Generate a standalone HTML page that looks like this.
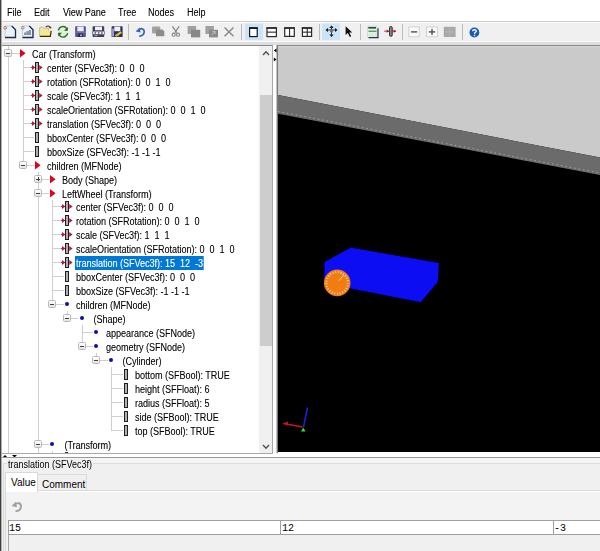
<!DOCTYPE html>
<html><head><meta charset="utf-8">
<style>
*{box-sizing:border-box}
html,body{margin:0;padding:0}
body{width:600px;height:551px;overflow:hidden;position:relative;background:#f0f0f0;font-family:"Liberation Sans",sans-serif;font-size:9px;color:#000}
.a{position:absolute}
.mi{position:absolute;top:7px;font-size:10px;line-height:12px;color:#000;text-shadow:0.4px 0 0 rgba(0,0,0,0.25);transform:scaleX(0.9);transform-origin:0 0}
.ft{font-size:10px;transform:scaleX(0.9);transform-origin:0 0}
.sep{position:absolute;top:24px;width:1px;height:17px;background:#c8c8c8}
#tree{position:absolute;left:1px;top:45px;width:272px;height:409px;background:#fff;overflow:hidden;border-top:1px solid #8a8a8a;border-left:1px solid #c8c8c8;border-right:1px solid #a8a8a8;border-bottom:1px solid #a8a8a8}
#treec .vl{position:absolute;width:1px;background:#cfcfcf}
#treec .hl{position:absolute;height:1px;background:#cfcfcf}
#treec .bx{position:absolute;width:8px;height:8px;border:1px solid #b8b8b8;border-radius:1.5px;background:linear-gradient(#fff,#e4e4e4)}
#treec .bx .mh{position:absolute;left:1px;top:2.5px;width:4px;height:1.2px;background:#404040}
#treec .bx .mv{position:absolute;left:2.5px;top:1px;width:1.2px;height:4px;background:#404040}
#treec .tri{position:absolute;width:0;height:0;border-left:6px solid #e0001a;border-top:4px solid transparent;border-bottom:4px solid transparent}
#treec .dot{position:absolute;width:4px;height:4px;border-radius:50%;background:#1010a0}
#treec .ic{position:absolute}
#treec .tt{text-shadow:0.4px 0 0 rgba(0,0,0,0.25);position:absolute;height:14px;line-height:14px;font-size:10px;white-space:pre;padding:1px 1px 0 1px;color:#000;overflow:hidden;letter-spacing:0;transform:scaleX(0.9);transform-origin:0 0}
#treec .sel{background:#0078d7;color:#fff;text-shadow:0.4px 0 0 rgba(255,255,255,0.35)}
</style></head><body>
<!-- window left border -->
<div class="a" style="left:0;top:0;width:1px;height:551px;background:#404040;z-index:5"></div>
<div class="a" style="left:1px;top:0;width:1px;height:551px;background:#b0b0b0;z-index:5"></div>
<!-- menu bar -->
<div class="a" style="left:1px;top:0;width:599px;height:21px;background:#fff"></div>
<div class="mi" style="left:7px">File</div>
<div class="mi" style="left:34px">Edit</div>
<div class="mi" style="left:63px">View Pane</div>
<div class="mi" style="left:118px">Tree</div>
<div class="mi" style="left:148px">Nodes</div>
<div class="mi" style="left:187px">Help</div>
<div class="a" style="left:1px;top:21px;width:599px;height:1px;background:#cfcfcf"></div>
<div class="a" style="left:1px;top:22px;width:599px;height:1px;background:#fafafa"></div>
<!-- toolbar bottom -->
<div class="a" style="left:1px;top:41px;width:599px;height:1px;background:#fbfbfb"></div>
<div class="a" style="left:1px;top:42px;width:599px;height:3px;background:#dedede"></div>
<svg class="a" style="left:0;top:0" width="600" height="45" viewBox="0 0 600 45">
<!-- separators -->
<g fill="#bcbcbc">
<rect x="128" y="24" width="1" height="16"/>
<rect x="241" y="24" width="1" height="16"/>
<rect x="319" y="24" width="1" height="16"/>
<rect x="360" y="24" width="1" height="16"/>
<rect x="402" y="24" width="1" height="16"/>
<rect x="462" y="24" width="1" height="16"/>
</g>
<!-- selected buttons -->
<rect x="245" y="23.5" width="18" height="16.5" fill="#cce4f7"/>
<rect x="322" y="23.5" width="18" height="16.5" fill="#cce4f7"/>
<!-- 1 new doc -->
<path d="M5 26H11.8L15.5 29.7V37.5H5Z" fill="#e6f2fc" stroke="#b8c4d0" stroke-width="0.8"/>
<path d="M11.8 26L15.5 29.7V37.5H5" fill="none" stroke="#202a48" stroke-width="1.3"/>
<circle cx="5.2" cy="27.8" r="1.4" fill="none" stroke="#d07050" stroke-width="1"/>
<!-- 2 new doc template -->
<path d="M22.5 26H29.3L33 29.7V37.5H22.5Z" fill="#e6f2fc" stroke="#b8c4d0" stroke-width="0.8"/>
<path d="M29.3 26L33 29.7V37.5H22.5" fill="none" stroke="#202a48" stroke-width="1.3"/>
<path d="M24 35V32.5H26.5V31H29V30H31V35Z" fill="#8a96a8"/>
<circle cx="22.7" cy="27.8" r="1.4" fill="none" stroke="#c08070" stroke-width="1"/>
<!-- 3 folder -->
<path d="M39.6 36.3V28Q39.6 27.2 40.4 27.2H43.4L44.4 28.2H48.6V31" fill="#ece4a8" stroke="#b8ac70" stroke-width="0.7"/>
<path d="M40.6 30.8H51.2L50.3 36.4H39.8Z" fill="#f4ea8c"/>
<path d="M39.8 36.4H50.3L51.2 30.8" fill="none" stroke="#2c2c08" stroke-width="1.2"/>
<path d="M45.8 27.2Q48.2 24.6 50.4 27.6" fill="none" stroke="#353535" stroke-width="1.2"/>
<circle cx="50.5" cy="27.6" r="0.9" fill="#353535"/>
<!-- 4 refresh -->
<circle cx="63" cy="31.8" r="4.6" fill="#dcf6d4"/>
<path d="M58.4 30.5A4.6 4.6 0 0 1 66.8 28.6" fill="none" stroke="#2e6e2e" stroke-width="1.3"/>
<path d="M67.6 33.2A4.6 4.6 0 0 1 59.3 35.2" fill="none" stroke="#2e6e2e" stroke-width="1.3"/>
<path d="M67.8 27V30.8H64Z" fill="#235a23"/>
<path d="M58.2 36.6V32.8H62Z" fill="#235a23"/>
<!-- 5 save -->
<rect x="75.2" y="26.3" width="10.6" height="10.6" rx="0.6" fill="#52528e"/>
<rect x="77.3" y="26.6" width="6.4" height="4.8" fill="#eceef8"/>
<rect x="76" y="31.6" width="9" height="1.2" fill="#7c7cb0"/>
<rect x="78.3" y="33.6" width="4.4" height="3.3" fill="#26264e"/>
<rect x="80.3" y="34.6" width="1.3" height="1.5" fill="#ffffff"/>
<!-- 6 save all -->
<rect x="92.6" y="26.3" width="11.6" height="10.6" rx="0.6" fill="#3c3c5c"/>
<rect x="95" y="26.7" width="7" height="3.6" fill="#f2f2f6"/>
<rect x="92.8" y="31.2" width="11.8" height="3.4" rx="0.8" fill="#f4f4f8" stroke="#3c3c5c" stroke-width="0.6"/>
<rect x="94.6" y="32.3" width="1.5" height="1.3" fill="#303048"/>
<rect x="97.9" y="32.3" width="1.5" height="1.3" fill="#303048"/>
<rect x="101.2" y="32.3" width="1.5" height="1.3" fill="#303048"/>
<rect x="94.5" y="35.2" width="3" height="1" fill="#b0b0c8"/>
<!-- 7 save as -->
<rect x="111.6" y="26.3" width="11" height="10.7" rx="0.6" fill="#2e2e5a"/>
<rect x="112" y="28.5" width="2" height="8" fill="#9890d8"/>
<rect x="114.3" y="26.6" width="6" height="4.6" fill="#f0f0f8"/>
<path d="M114.8 35.5L120.5 31.2L122 32.8L116.5 36.8Z" fill="#d8d028"/>
<path d="M115.5 34.2L118.8 35.8" stroke="#a8a020" stroke-width="0.8"/>
<!-- 8 undo -->
<path d="M138.8 30C141 27.8 144.2 28.6 144.2 31.6C144.2 34.4 141.8 36 139.2 36.2" fill="none" stroke="#3464c0" stroke-width="1.7"/>
<path d="M135.6 31.4L139.6 27.4L140.6 32.6Z" fill="#3464c0"/>
<!-- 9 redo grey squares -->
<rect x="152" y="26.4" width="8.2" height="7" rx="1" fill="#a2a2a2"/>
<path d="M156 29.6H162.5L164.3 31.4V36.2H156Z" fill="#8c8c8c"/>
<!-- 10 scissors -->
<path d="M172.4 26.4L176.8 32.6M179.2 26.4L174.8 32.6" stroke="#858585" stroke-width="1.2"/>
<circle cx="173.7" cy="34.7" r="1.6" fill="none" stroke="#858585" stroke-width="1.1"/>
<circle cx="178" cy="34.7" r="1.6" fill="none" stroke="#858585" stroke-width="1.1"/>
<!-- 11 copy -->
<rect x="187.6" y="26" width="8.5" height="8" fill="#a0a0a0"/>
<rect x="191" y="29.8" width="9.2" height="7.6" fill="#888888"/>
<!-- 12 paste -->
<rect x="205.4" y="26" width="8.5" height="8" fill="#a0a0a0"/>
<rect x="209" y="29.8" width="9" height="7.6" fill="#8a8a8a"/>
<path d="M211.5 35L215 31.5M212.5 31.5H215V34" stroke="#c8c8c8" stroke-width="0.9" fill="none"/>
<!-- 13 X -->
<path d="M224.5 27.5L233.5 36.2M233.5 27.5L224.5 36.2" stroke="#8a8a8a" stroke-width="1.5"/>
<!-- 14 layout single -->
<rect x="249.6" y="28" width="7.6" height="8.6" fill="#fff" stroke="#1a1a1a" stroke-width="1.2"/>
<rect x="249" y="27.2" width="8.8" height="1.8" fill="#1a1a1a"/>
<!-- 15 layout hsplit -->
<rect x="267" y="28" width="9.4" height="8.6" fill="#fff" stroke="#2a2a2a" stroke-width="1.2"/>
<rect x="266.4" y="27.2" width="10.6" height="1.6" fill="#2a2a2a"/>
<rect x="267" y="31.6" width="9.4" height="1.1" fill="#2a2a2a"/>
<!-- 16 layout vsplit -->
<rect x="284.7" y="28" width="9.6" height="8.4" fill="#fff" stroke="#2a2a2a" stroke-width="1.2"/>
<rect x="284.1" y="27.2" width="10.8" height="1.6" fill="#2a2a2a"/>
<rect x="289" y="28" width="1.1" height="8.4" fill="#2a2a2a"/>
<!-- 17 layout grid -->
<rect x="302.4" y="28" width="9.2" height="8.4" fill="#fff" stroke="#2a2a2a" stroke-width="1.2"/>
<rect x="301.8" y="27.2" width="10.4" height="1.6" fill="#2a2a2a"/>
<rect x="306.7" y="28" width="1.1" height="8.4" fill="#2a2a2a"/>
<rect x="302.4" y="31.6" width="9.2" height="1.1" fill="#2a2a2a"/>
<!-- 18 move -->
<path d="M331.5 25.5L333.6 28H329.4Z M331.5 37L333.6 34.5H329.4Z M325.5 30L328 27.9V32.1Z M337.5 30L335 27.9V32.1Z" fill="#101010"/>
<path d="M331.5 27.5V35M327.5 30H335.5" stroke="#303030" stroke-width="1"/>
<circle cx="331.5" cy="31" r="1.6" fill="#707070"/>
<!-- 19 arrow cursor -->
<path d="M345.6 26.3V35L347.8 33L349.8 37L351.2 36.3L349.3 32.5H352.3Z" fill="#101010"/>
<!-- 20 list -->
<path d="M367.6 26.2H377V37.2H367.6Z" fill="#e8f4e8" stroke="#c0c8c0" stroke-width="0.6"/>
<path d="M378 28.2V37.7H368.5" fill="none" stroke="#2a3050" stroke-width="1.2"/>
<rect x="368.5" y="27" width="7.5" height="1.4" fill="#2a6a3a"/>
<rect x="368.5" y="30.6" width="8" height="1.2" fill="#3a8a4a"/>
<rect x="368.5" y="32.5" width="8" height="3.8" fill="#d8ecd8"/>
<!-- 21 field icon -->
<path d="M384.2 31.2H389.2M392.4 31.2H396" stroke="#c02040" stroke-width="0.9"/>
<path d="M386.6 29.6L389.2 31.2L386.6 32.8Z" fill="#b01030"/>
<path d="M393.6 29.6L396.2 31.2L393.6 32.8Z" fill="#b01030"/>
<rect x="389.6" y="26.6" width="2.6" height="9.6" rx="0.8" fill="#909090" stroke="#1a1a1a" stroke-width="0.9"/>
<rect x="3" y="3" width="0" height="0"/>
<!-- 20b list tweak -->
<rect x="368.5" y="27" width="7.5" height="1.4" fill="#2a4a30"/>
<!-- 22 minus box -->
<rect x="408.9" y="27" width="10.3" height="9.8" fill="#fcfcfc" stroke="#c8c8c8" stroke-width="0.8"/>
<rect x="411" y="31.2" width="6.2" height="1.4" fill="#505050"/>
<!-- 23 plus box -->
<rect x="426.6" y="27" width="10.8" height="9.8" fill="#fcfcfc" stroke="#c8c8c8" stroke-width="0.8"/>
<rect x="428.8" y="31.2" width="6.4" height="1.4" fill="#505050"/>
<rect x="431.3" y="28.8" width="1.4" height="6.2" fill="#505050"/>
<!-- 24 grey box -->
<rect x="443.8" y="26.8" width="11.8" height="10.2" fill="#a8a8a8"/>
<rect x="445.5" y="31.4" width="8.4" height="1" fill="#b8b8b8"/>
<rect x="449.2" y="28" width="1" height="8" fill="#b4b4b4"/>
<!-- 25 help -->
<circle cx="474.4" cy="32.5" r="4.9" fill="#1a5cb0"/>
<path d="M472.6 31.2C472.6 29.3 476.3 29.3 476.3 31C476.3 32.3 474.5 32.3 474.5 34" fill="none" stroke="#fff" stroke-width="1.3"/>
<rect x="473.8" y="34.8" width="1.4" height="1.3" fill="#fff"/>
</svg>

<!-- tree -->
<div id="tree"></div>
<div class="a" id="treec" style="left:2px;top:46px;width:258px;height:407px;overflow:hidden">
<div class="a" style="left:-2px;top:-46px;width:600px;height:551px">
<div class="vl" style="left:8px;top:46px;height:407px"></div>
<div class="vl" style="left:23px;top:60px;height:105px"></div>
<div class="vl" style="left:38px;top:172px;height:281px"></div>
<div class="vl" style="left:52px;top:200px;height:104px"></div>
<div class="vl" style="left:67px;top:311px;height:7px"></div>
<div class="vl" style="left:82px;top:325px;height:21px"></div>
<div class="vl" style="left:96px;top:353px;height:7px"></div>
<div class="vl" style="left:111px;top:367px;height:63px"></div>
<div class="vl" style="left:52px;top:451px;height:2px"></div>
<div class="hl" style="left:8px;top:53px;width:12px"></div>
<div class="bx" style="left:4px;top:49px"><i class="mh"></i></div>
<svg class="ic" style="left:20px;top:49px" width="6" height="9" viewBox="0 0 6 9"><path d="M0 0L5.6 4.25L0 8.5Z" fill="#e0001a"/></svg>
<div class="tt" style="left:31px;top:47px">Car (Transform)</div>
<div class="hl" style="left:23px;top:67px;width:8px"></div>
<svg class="ic" style="left:31px;top:62px" width="12" height="11" viewBox="0 0 12 11"><path d="M0 5.5h4" stroke="#b8304a" stroke-width="1.1"/><path d="M1 3L4.3 5.5L1 8z" fill="#b81838"/><rect x="4.5" y="0.5" width="3" height="10" fill="#b0b0b0" stroke="#1e1e1e"/><path d="M8.2 3L11.6 5.5L8.2 8z" fill="#b81838"/></svg>
<div class="tt" style="left:46px;top:61px">center (SFVec3f): 0&nbsp; 0&nbsp; 0</div>
<div class="hl" style="left:23px;top:81px;width:8px"></div>
<svg class="ic" style="left:31px;top:76px" width="12" height="11" viewBox="0 0 12 11"><path d="M0 5.5h4" stroke="#b8304a" stroke-width="1.1"/><path d="M1 3L4.3 5.5L1 8z" fill="#b81838"/><rect x="4.5" y="0.5" width="3" height="10" fill="#b0b0b0" stroke="#1e1e1e"/><path d="M8.2 3L11.6 5.5L8.2 8z" fill="#b81838"/></svg>
<div class="tt" style="left:46px;top:75px">rotation (SFRotation): 0&nbsp; 0&nbsp; 1&nbsp; 0</div>
<div class="hl" style="left:23px;top:95px;width:8px"></div>
<svg class="ic" style="left:31px;top:90px" width="12" height="11" viewBox="0 0 12 11"><path d="M0 5.5h4" stroke="#b8304a" stroke-width="1.1"/><path d="M1 3L4.3 5.5L1 8z" fill="#b81838"/><rect x="4.5" y="0.5" width="3" height="10" fill="#b0b0b0" stroke="#1e1e1e"/><path d="M8.2 3L11.6 5.5L8.2 8z" fill="#b81838"/></svg>
<div class="tt" style="left:46px;top:89px">scale (SFVec3f): 1&nbsp; 1&nbsp; 1</div>
<div class="hl" style="left:23px;top:109px;width:8px"></div>
<svg class="ic" style="left:31px;top:104px" width="12" height="11" viewBox="0 0 12 11"><path d="M0 5.5h4" stroke="#b8304a" stroke-width="1.1"/><path d="M1 3L4.3 5.5L1 8z" fill="#b81838"/><rect x="4.5" y="0.5" width="3" height="10" fill="#b0b0b0" stroke="#1e1e1e"/><path d="M8.2 3L11.6 5.5L8.2 8z" fill="#b81838"/></svg>
<div class="tt" style="left:46px;top:103px">scaleOrientation (SFRotation): 0&nbsp; 0&nbsp; 1&nbsp; 0</div>
<div class="hl" style="left:23px;top:123px;width:8px"></div>
<svg class="ic" style="left:31px;top:118px" width="12" height="11" viewBox="0 0 12 11"><path d="M0 5.5h4" stroke="#b8304a" stroke-width="1.1"/><path d="M1 3L4.3 5.5L1 8z" fill="#b81838"/><rect x="4.5" y="0.5" width="3" height="10" fill="#b0b0b0" stroke="#1e1e1e"/><path d="M8.2 3L11.6 5.5L8.2 8z" fill="#b81838"/></svg>
<div class="tt" style="left:46px;top:117px">translation (SFVec3f): 0&nbsp; 0&nbsp; 0</div>
<div class="hl" style="left:23px;top:137px;width:11px"></div>
<svg class="ic" style="left:35px;top:132px" width="5" height="11" viewBox="0 0 5 11"><rect x="0.5" y="0.5" width="3" height="10" fill="#b0b0b0" stroke="#1e1e1e"/></svg>
<div class="tt" style="left:46px;top:131px">bboxCenter (SFVec3f): 0&nbsp; 0&nbsp; 0</div>
<div class="hl" style="left:23px;top:151px;width:11px"></div>
<svg class="ic" style="left:35px;top:146px" width="5" height="11" viewBox="0 0 5 11"><rect x="0.5" y="0.5" width="3" height="10" fill="#b0b0b0" stroke="#1e1e1e"/></svg>
<div class="tt" style="left:46px;top:145px">bboxSize (SFVec3f): -1 -1 -1</div>
<div class="hl" style="left:23px;top:165px;width:11px"></div>
<div class="bx" style="left:19px;top:161px"><i class="mh"></i></div>
<svg class="ic" style="left:35px;top:161px" width="6" height="9" viewBox="0 0 6 9"><path d="M0 0L5.6 4.25L0 8.5Z" fill="#e0001a"/></svg>
<div class="tt" style="left:46px;top:159px">children (MFNode)</div>
<div class="hl" style="left:38px;top:179px;width:11px"></div>
<div class="bx" style="left:34px;top:175px"><i class="mh"></i><i class="mv"></i></div>
<svg class="ic" style="left:50px;top:175px" width="6" height="9" viewBox="0 0 6 9"><path d="M0 0L5.6 4.25L0 8.5Z" fill="#e0001a"/></svg>
<div class="tt" style="left:61px;top:173px">Body (Shape)</div>
<div class="hl" style="left:38px;top:193px;width:11px"></div>
<div class="bx" style="left:34px;top:189px"><i class="mh"></i></div>
<svg class="ic" style="left:50px;top:189px" width="6" height="9" viewBox="0 0 6 9"><path d="M0 0L5.6 4.25L0 8.5Z" fill="#e0001a"/></svg>
<div class="tt" style="left:61px;top:187px">LeftWheel (Transform)</div>
<div class="hl" style="left:52px;top:206px;width:9px"></div>
<svg class="ic" style="left:61px;top:201px" width="12" height="11" viewBox="0 0 12 11"><path d="M0 5.5h4" stroke="#b8304a" stroke-width="1.1"/><path d="M1 3L4.3 5.5L1 8z" fill="#b81838"/><rect x="4.5" y="0.5" width="3" height="10" fill="#b0b0b0" stroke="#1e1e1e"/><path d="M8.2 3L11.6 5.5L8.2 8z" fill="#b81838"/></svg>
<div class="tt" style="left:75px;top:200px">center (SFVec3f): 0&nbsp; 0&nbsp; 0</div>
<div class="hl" style="left:52px;top:220px;width:9px"></div>
<svg class="ic" style="left:61px;top:215px" width="12" height="11" viewBox="0 0 12 11"><path d="M0 5.5h4" stroke="#b8304a" stroke-width="1.1"/><path d="M1 3L4.3 5.5L1 8z" fill="#b81838"/><rect x="4.5" y="0.5" width="3" height="10" fill="#b0b0b0" stroke="#1e1e1e"/><path d="M8.2 3L11.6 5.5L8.2 8z" fill="#b81838"/></svg>
<div class="tt" style="left:75px;top:214px">rotation (SFRotation): 0&nbsp; 0&nbsp; 1&nbsp; 0</div>
<div class="hl" style="left:52px;top:234px;width:9px"></div>
<svg class="ic" style="left:61px;top:229px" width="12" height="11" viewBox="0 0 12 11"><path d="M0 5.5h4" stroke="#b8304a" stroke-width="1.1"/><path d="M1 3L4.3 5.5L1 8z" fill="#b81838"/><rect x="4.5" y="0.5" width="3" height="10" fill="#b0b0b0" stroke="#1e1e1e"/><path d="M8.2 3L11.6 5.5L8.2 8z" fill="#b81838"/></svg>
<div class="tt" style="left:75px;top:228px">scale (SFVec3f): 1&nbsp; 1&nbsp; 1</div>
<div class="hl" style="left:52px;top:248px;width:9px"></div>
<svg class="ic" style="left:61px;top:243px" width="12" height="11" viewBox="0 0 12 11"><path d="M0 5.5h4" stroke="#b8304a" stroke-width="1.1"/><path d="M1 3L4.3 5.5L1 8z" fill="#b81838"/><rect x="4.5" y="0.5" width="3" height="10" fill="#b0b0b0" stroke="#1e1e1e"/><path d="M8.2 3L11.6 5.5L8.2 8z" fill="#b81838"/></svg>
<div class="tt" style="left:75px;top:242px">scaleOrientation (SFRotation): 0&nbsp; 0&nbsp; 1&nbsp; 0</div>
<div class="hl" style="left:52px;top:262px;width:9px"></div>
<svg class="ic" style="left:61px;top:257px" width="12" height="11" viewBox="0 0 12 11"><path d="M0 5.5h4" stroke="#b8304a" stroke-width="1.1"/><path d="M1 3L4.3 5.5L1 8z" fill="#b81838"/><rect x="4.5" y="0.5" width="3" height="10" fill="#b0b0b0" stroke="#1e1e1e"/><path d="M8.2 3L11.6 5.5L8.2 8z" fill="#b81838"/></svg>
<div class="tt sel" style="left:75px;top:256px">translation (SFVec3f): 15&nbsp; 12&nbsp; -3</div>
<div class="hl" style="left:52px;top:276px;width:12px"></div>
<svg class="ic" style="left:65px;top:271px" width="5" height="11" viewBox="0 0 5 11"><rect x="0.5" y="0.5" width="3" height="10" fill="#b0b0b0" stroke="#1e1e1e"/></svg>
<div class="tt" style="left:75px;top:270px">bboxCenter (SFVec3f): 0&nbsp; 0&nbsp; 0</div>
<div class="hl" style="left:52px;top:290px;width:12px"></div>
<svg class="ic" style="left:65px;top:285px" width="5" height="11" viewBox="0 0 5 11"><rect x="0.5" y="0.5" width="3" height="10" fill="#b0b0b0" stroke="#1e1e1e"/></svg>
<div class="tt" style="left:75px;top:284px">bboxSize (SFVec3f): -1 -1 -1</div>
<div class="hl" style="left:52px;top:304px;width:12px"></div>
<div class="bx" style="left:48px;top:300px"><i class="mh"></i></div>
<div class="dot" style="left:65px;top:302px"></div>
<div class="tt" style="left:75px;top:298px">children (MFNode)</div>
<div class="hl" style="left:67px;top:318px;width:11px"></div>
<div class="bx" style="left:63px;top:314px"><i class="mh"></i></div>
<div class="dot" style="left:80px;top:316px"></div>
<div class="tt" style="left:90px;top:312px">&nbsp;(Shape)</div>
<div class="hl" style="left:82px;top:332px;width:11px"></div>
<div class="dot" style="left:94px;top:330px"></div>
<div class="tt" style="left:105px;top:326px">appearance (SFNode)</div>
<div class="hl" style="left:82px;top:346px;width:11px"></div>
<div class="bx" style="left:78px;top:342px"><i class="mh"></i></div>
<div class="dot" style="left:94px;top:344px"></div>
<div class="tt" style="left:105px;top:340px">geometry (SFNode)</div>
<div class="hl" style="left:96px;top:360px;width:12px"></div>
<div class="bx" style="left:92px;top:356px"><i class="mh"></i></div>
<div class="dot" style="left:109px;top:358px"></div>
<div class="tt" style="left:119px;top:354px">&nbsp;(Cylinder)</div>
<div class="hl" style="left:111px;top:374px;width:12px"></div>
<svg class="ic" style="left:124px;top:369px" width="5" height="11" viewBox="0 0 5 11"><rect x="0.5" y="0.5" width="3" height="10" fill="#b0b0b0" stroke="#1e1e1e"/></svg>
<div class="tt" style="left:134px;top:368px">bottom (SFBool): TRUE</div>
<div class="hl" style="left:111px;top:388px;width:12px"></div>
<svg class="ic" style="left:124px;top:383px" width="5" height="11" viewBox="0 0 5 11"><rect x="0.5" y="0.5" width="3" height="10" fill="#b0b0b0" stroke="#1e1e1e"/></svg>
<div class="tt" style="left:134px;top:382px">height (SFFloat): 6</div>
<div class="hl" style="left:111px;top:402px;width:12px"></div>
<svg class="ic" style="left:124px;top:397px" width="5" height="11" viewBox="0 0 5 11"><rect x="0.5" y="0.5" width="3" height="10" fill="#b0b0b0" stroke="#1e1e1e"/></svg>
<div class="tt" style="left:134px;top:396px">radius (SFFloat): 5</div>
<div class="hl" style="left:111px;top:416px;width:12px"></div>
<svg class="ic" style="left:124px;top:411px" width="5" height="11" viewBox="0 0 5 11"><rect x="0.5" y="0.5" width="3" height="10" fill="#b0b0b0" stroke="#1e1e1e"/></svg>
<div class="tt" style="left:134px;top:410px">side (SFBool): TRUE</div>
<div class="hl" style="left:111px;top:430px;width:12px"></div>
<svg class="ic" style="left:124px;top:425px" width="5" height="11" viewBox="0 0 5 11"><rect x="0.5" y="0.5" width="3" height="10" fill="#b0b0b0" stroke="#1e1e1e"/></svg>
<div class="tt" style="left:134px;top:424px">top (SFBool): TRUE</div>
<div class="hl" style="left:38px;top:444px;width:11px"></div>
<div class="bx" style="left:34px;top:440px"><i class="mh"></i></div>
<div class="dot" style="left:50px;top:442px"></div>
<div class="tt" style="left:61px;top:438px">&nbsp;(Transform)</div>
<div class="hl" style="left:52px;top:458px;width:12px"></div>
<svg class="ic" style="left:65px;top:453px" width="5" height="11" viewBox="0 0 5 11"><rect x="0.5" y="0.5" width="3" height="10" fill="#b0b0b0" stroke="#1e1e1e"/></svg>
</div>
</div>
<div class="a" style="left:65px;top:452px;width:3px;height:1px;background:#303030"></div>
<!-- scrollbar -->
<div class="a" style="left:259px;top:46px;width:13px;height:407px;background:#f0f0f0"></div>
<svg class="a" style="left:262px;top:50px" width="8" height="6" viewBox="0 0 8 6"><path d="M1 5L4 1.8L7 5" fill="none" stroke="#505050" stroke-width="1.4"/></svg>
<svg class="a" style="left:262px;top:444px" width="8" height="6" viewBox="0 0 8 6"><path d="M1 1L4 4.2L7 1" fill="none" stroke="#505050" stroke-width="1.4"/></svg>
<div class="a" style="left:260px;top:95px;width:12px;height:251px;background:#cdcdcd"></div>
<!-- vertical splitter -->
<div class="a" style="left:273px;top:45px;width:3px;height:409px;background:#fff"></div>
<div class="a" style="left:276px;top:45px;width:1px;height:408px;background:#c4c4c4"></div>
<svg class="a" style="left:273px;top:47px" width="4" height="16" viewBox="0 0 4 16"><path d="M3.5 1.5L0.8 3.5L3.5 5.5z" fill="#000"/><path d="M0.8 10.5L3.5 12.5L0.8 14.5z" fill="#000"/></svg>
<div class="a" style="left:277px;top:45px;width:1px;height:408px;background:#7a7a7a"></div>
<div class="a" style="left:278px;top:45px;width:322px;height:1px;background:#8a8a8a"></div>
<!-- 3D view -->
<svg class="a" style="left:278px;top:46px" width="322" height="406" viewBox="0 0 322 406">
<defs><filter id="sf" x="-10%" y="-10%" width="120%" height="120%"><feGaussianBlur stdDeviation="0.6"/></filter></defs>
<rect width="322" height="406" fill="#000"/>
<polygon points="0,0 322,0 322,111.5 0,49" fill="#cacaca"/>
<polygon points="0,49 322,111.5 322,129 0,67.7" fill="#6b6b6b"/>
<line x1="0" y1="65.5" x2="322" y2="127" stroke="#a8a8a8" stroke-width="1" stroke-dasharray="1.5 3"/>
<polygon filter="url(#sf)" points="72.6,201.6 161,217 159.8,236 142.7,256.3 46,237.2 46.5,216" fill="#0808f4"/>
<circle cx="59.2" cy="236.9" r="13.3" fill="#f07c12"/>
<circle cx="59.2" cy="236.9" r="10.8" fill="none" stroke="#fcd8a8" stroke-width="2.2" stroke-dasharray="0.9 1.8"/>
<line x1="61" y1="234.5" x2="65.5" y2="229.5" stroke="#fde0b0" stroke-width="1"/>
<line x1="24.5" y1="381" x2="5.5" y2="377.5" stroke="#c81818" stroke-width="1.5"/><path d="M4.5 377.5L10 375.5L10 379.5Z" fill="#c01818"/>
<line x1="25.5" y1="381" x2="29.5" y2="361.5" stroke="#2020d8" stroke-width="1.6"/>
<path d="M25.3 381.5L27.5 385.5H23Z" fill="#30e030"/>
</svg>
<div class="a" style="left:278px;top:46px;width:322px;height:1px;background:#d6d6d6"></div>
<!-- bottom of top area -->
<div class="a" style="left:278px;top:452px;width:322px;height:2px;background:#fff"></div>
<div class="a" style="left:1px;top:454px;width:599px;height:3px;background:#fff"></div>
<svg class="a" style="left:1px;top:454px" width="20" height="4" viewBox="0 0 20 4"><path d="M1.5 3.5L4 1L6.5 3.5z" fill="#000"/><path d="M11 1L13.5 3.5L16 1z" fill="#000"/></svg>
<div class="a" style="left:1px;top:457px;width:599px;height:1px;background:#9a9a9a"></div>
<div class="a" style="left:1px;top:458px;width:599px;height:5px;background:#f5f5f5"></div>
<!-- group box -->
<div class="a" style="left:3px;top:463px;width:600px;height:100px;border-left:1px solid #dcdcdc;border-top:1px solid #dcdcdc"></div>
<div class="a" style="left:7px;top:459px;width:86px;height:10px;background:#f0f0f0"></div>
<div class="a ft" style="left:8px;top:459px;line-height:12px;white-space:pre">translation (SFVec3f)</div>
<!-- tabs -->
<div class="a" style="left:5px;top:490px;width:600px;height:70px;border-left:1px solid #d9d9d9;border-top:1px solid #d9d9d9;background:#f3f3f3"></div>
<div class="a" style="left:6px;top:491px;width:600px;height:1px;background:#fff"></div>
<div class="a" style="left:5px;top:472px;width:33px;height:20px;border:1px solid #d9d9d9;border-bottom:none;background:#fff"></div>
<div class="a" style="left:11px;top:477px;font-size:10px;line-height:12px">Value</div>
<div class="a" style="left:38px;top:474px;width:49px;height:16px;border:1px solid #d9d9d9;border-left:none;border-bottom:none;background:#f0f0f0"></div>
<div class="a" style="left:42px;top:479px;font-size:10px;line-height:12px">Comment</div>
<!-- undo icon -->
<svg class="a" style="left:0;top:0" width="30" height="551" viewBox="0 0 30 551">
<g transform="translate(11.4 501.2) scale(1.1) translate(-135.5 -27)">
<path d="M138.8 30C141 27.8 144.2 28.6 144.2 31.6C144.2 34.4 141.8 36 139.2 36.2" fill="none" stroke="#a0a0a0" stroke-width="1.7"/>
<path d="M135.6 31.4L139.6 27.4L140.6 32.6Z" fill="#a0a0a0"/>
</g></svg>
<!-- value fields -->
<div class="a" style="left:8px;top:534px;width:600px;height:30px;border-left:1px solid #a8a8a8;background:#f0f0f0"></div>
<div class="a" style="left:8px;top:520px;width:600px;height:15px;border:1px solid #a0a0a0;background:#fff"></div>
<div class="a" style="left:280px;top:520px;width:1px;height:15px;background:#a0a0a0"></div>
<div class="a" style="left:553px;top:520px;width:1px;height:15px;background:#a0a0a0"></div>
<div class="a" style="left:9px;top:523px;font-family:'Liberation Mono',monospace;font-size:10px;line-height:12px">15</div>
<div class="a" style="left:282px;top:523px;font-family:'Liberation Mono',monospace;font-size:10px;line-height:12px">12</div>
<div class="a" style="left:554px;top:523px;font-family:'Liberation Mono',monospace;font-size:10px;line-height:12px">-3</div>

</body></html>
